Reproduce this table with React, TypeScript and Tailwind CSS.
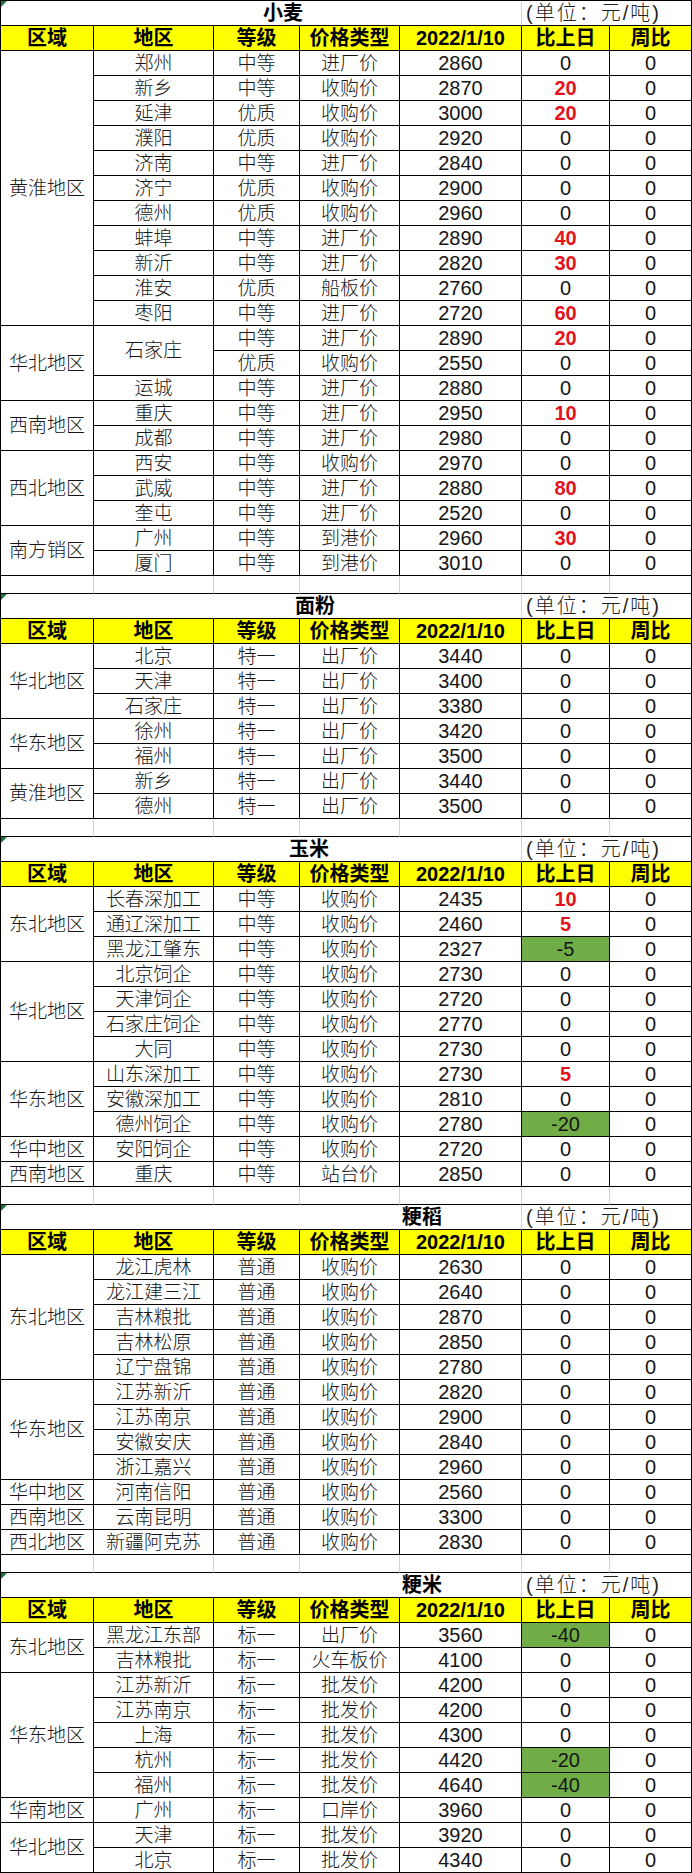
import React from "react";

type R = [string | null, string, string, number, number];
type Group = { area: string; rows: R[] };
type Section = { title: string; pl: string; groups: Group[] };

const sections: Section[] = [
  {
    title: "小麦",
    pl: "pl-[262px]",
    groups: [
      {
        area: "黄淮地区",
        rows: [
          ["郑州", "中等", "进厂价", 2860, 0],
          ["新乡", "中等", "收购价", 2870, 20],
          ["延津", "优质", "收购价", 3000, 20],
          ["濮阳", "优质", "收购价", 2920, 0],
          ["济南", "中等", "进厂价", 2840, 0],
          ["济宁", "优质", "收购价", 2900, 0],
          ["德州", "优质", "收购价", 2960, 0],
          ["蚌埠", "中等", "进厂价", 2890, 40],
          ["新沂", "中等", "进厂价", 2820, 30],
          ["淮安", "优质", "船板价", 2760, 0],
          ["枣阳", "中等", "进厂价", 2720, 60],
        ],
      },
      {
        area: "华北地区",
        rows: [
          ["石家庄", "中等", "进厂价", 2890, 20],
          [null, "优质", "收购价", 2550, 0],
          ["运城", "中等", "进厂价", 2880, 0],
        ],
      },
      {
        area: "西南地区",
        rows: [
          ["重庆", "中等", "进厂价", 2950, 10],
          ["成都", "中等", "进厂价", 2980, 0],
        ],
      },
      {
        area: "西北地区",
        rows: [
          ["西安", "中等", "收购价", 2970, 0],
          ["武威", "中等", "进厂价", 2880, 80],
          ["奎屯", "中等", "进厂价", 2520, 0],
        ],
      },
      {
        area: "南方销区",
        rows: [
          ["广州", "中等", "到港价", 2960, 30],
          ["厦门", "中等", "到港价", 3010, 0],
        ],
      },
    ],
  },
  {
    title: "面粉",
    pl: "pl-[294px]",
    groups: [
      {
        area: "华北地区",
        rows: [
          ["北京", "特一", "出厂价", 3440, 0],
          ["天津", "特一", "出厂价", 3400, 0],
          ["石家庄", "特一", "出厂价", 3380, 0],
        ],
      },
      {
        area: "华东地区",
        rows: [
          ["徐州", "特一", "出厂价", 3420, 0],
          ["福州", "特一", "出厂价", 3500, 0],
        ],
      },
      {
        area: "黄淮地区",
        rows: [
          ["新乡", "特一", "出厂价", 3440, 0],
          ["德州", "特一", "出厂价", 3500, 0],
        ],
      },
    ],
  },
  {
    title: "玉米",
    pl: "pl-[288px]",
    groups: [
      {
        area: "东北地区",
        rows: [
          ["长春深加工", "中等", "收购价", 2435, 10],
          ["通辽深加工", "中等", "收购价", 2460, 5],
          ["黑龙江肇东", "中等", "收购价", 2327, -5],
        ],
      },
      {
        area: "华北地区",
        rows: [
          ["北京饲企", "中等", "收购价", 2730, 0],
          ["天津饲企", "中等", "收购价", 2720, 0],
          ["石家庄饲企", "中等", "收购价", 2770, 0],
          ["大同", "中等", "收购价", 2730, 0],
        ],
      },
      {
        area: "华东地区",
        rows: [
          ["山东深加工", "中等", "收购价", 2730, 5],
          ["安徽深加工", "中等", "收购价", 2810, 0],
          ["德州饲企", "中等", "收购价", 2780, -20],
        ],
      },
      { area: "华中地区", rows: [["安阳饲企", "中等", "收购价", 2720, 0]] },
      { area: "西南地区", rows: [["重庆", "中等", "站台价", 2850, 0]] },
    ],
  },
  {
    title: "粳稻",
    pl: "pl-[401px]",
    groups: [
      {
        area: "东北地区",
        rows: [
          ["龙江虎林", "普通", "收购价", 2630, 0],
          ["龙江建三江", "普通", "收购价", 2640, 0],
          ["吉林粮批", "普通", "收购价", 2870, 0],
          ["吉林松原", "普通", "收购价", 2850, 0],
          ["辽宁盘锦", "普通", "收购价", 2780, 0],
        ],
      },
      {
        area: "华东地区",
        rows: [
          ["江苏新沂", "普通", "收购价", 2820, 0],
          ["江苏南京", "普通", "收购价", 2900, 0],
          ["安徽安庆", "普通", "收购价", 2840, 0],
          ["浙江嘉兴", "普通", "收购价", 2960, 0],
        ],
      },
      { area: "华中地区", rows: [["河南信阳", "普通", "收购价", 2560, 0]] },
      { area: "西南地区", rows: [["云南昆明", "普通", "收购价", 3300, 0]] },
      { area: "西北地区", rows: [["新疆阿克苏", "普通", "收购价", 2830, 0]] },
    ],
  },
  {
    title: "粳米",
    pl: "pl-[401px]",
    groups: [
      {
        area: "东北地区",
        rows: [
          ["黑龙江东部", "标一", "出厂价", 3560, -40],
          ["吉林粮批", "标一", "火车板价", 4100, 0],
        ],
      },
      {
        area: "华东地区",
        rows: [
          ["江苏新沂", "标一", "批发价", 4200, 0],
          ["江苏南京", "标一", "批发价", 4200, 0],
          ["上海", "标一", "批发价", 4300, 0],
          ["杭州", "标一", "批发价", 4420, -20],
          ["福州", "标一", "批发价", 4640, -40],
        ],
      },
      { area: "华南地区", rows: [["广州", "标一", "口岸价", 3960, 0]] },
      {
        area: "华北地区",
        rows: [
          ["天津", "标一", "批发价", 3920, 0],
          ["北京", "标一", "批发价", 4340, 0],
        ],
      },
    ],
  },
];

const spanCls: Record<number, string> = {
  1: "row-span-1",
  2: "row-span-2",
  3: "row-span-3",
  4: "row-span-4",
  5: "row-span-5",
  11: "row-span-11",
};

const base =
  "border-r border-b border-black flex items-center justify-center leading-none text-[#151515]";
const cell = "h-[25px] " + base + " text-[19px] font-light";
const merged = base + " text-[19px] font-light";
const num = "h-[25px] " + base + " text-[20px]";
const headCell =
  "h-[25px] border-r border-b border-black bg-[#ffff00] flex items-center justify-center text-[20px] font-bold leading-none text-black";

const headers = ["区域", "地区", "等级", "价格类型", "2022/1/10", "比上日", "周比"];

function Change({ v }: { v: number }) {
  if (v > 0) {
    return <div className={num + " !text-[#e4131b] font-bold"}>{v}</div>;
  }
  if (v < 0) {
    return <div className={num + " bg-[#70ad47]"}>{v}</div>;
  }
  return <div className={num}>0</div>;
}

function SectionRows({ s, first }: { s: Section; first: boolean }) {
  const out: React.ReactNode[] = [];
  if (!first) {
    for (let i = 0; i < 7; i++) {
      out.push(
        <div
          key={"e" + i}
          className={
            "h-[18px] border-b border-black " +
            (i === 6 ? "border-r border-r-black" : "border-r border-r-[#d4d4d4]")
          }
        />
      );
    }
  }
  out.push(
    <div
      key="title"
      className={
        "col-span-5 h-[25px] border-b border-black border-r border-r-[#d4d4d4] relative flex items-center text-[20px] font-bold leading-none text-black " +
        s.pl
      }
    >
      <span className="absolute left-0 top-0 w-0 h-0 border-t-[6px] border-t-[#217346] border-r-[6px] border-r-transparent" />
      {s.title}
    </div>
  );
  out.push(
    <div
      key="unit"
      className="col-span-2 h-[25px] border-b border-r border-black flex items-center pl-[4px] text-[20px] font-light leading-none text-[#222] tracking-[2px]"
    >
      (单位：元/吨)
    </div>
  );
  headers.forEach((h) =>
    out.push(
      <div key={"h" + h} className={headCell}>
        {h}
      </div>
    )
  );
  s.groups.forEach((g, gi) => {
    g.rows.forEach((r, ri) => {
      const k = `${gi}-${ri}`;
      if (ri === 0) {
        out.push(
          <div key={k + "a"} className={merged + " " + spanCls[g.rows.length]}>
            {g.area}
          </div>
        );
      }
      if (r[0] !== null) {
        let span = 1;
        while (ri + span < g.rows.length && g.rows[ri + span][0] === null) span++;
        out.push(
          <div
            key={k + "c"}
            className={(span > 1 ? merged : cell) + " " + spanCls[span]}
          >
            {r[0]}
          </div>
        );
      }
      out.push(
        <div key={k + "g"} className={cell}>
          {r[1]}
        </div>
      );
      out.push(
        <div key={k + "t"} className={cell}>
          {r[2]}
        </div>
      );
      out.push(
        <div key={k + "p"} className={num}>
          {r[3]}
        </div>
      );
      out.push(<Change key={k + "d"} v={r[4]} />);
      out.push(
        <div key={k + "w"} className={num}>
          0
        </div>
      );
    });
  });
  return <>{out}</>;
}

export default function App() {
  return (
    <div className="w-[692px] bg-white font-['Liberation_Sans','Noto_Sans_CJK_SC',sans-serif]">
      <div className="grid grid-cols-[93px_120px_86px_100px_122px_88px_82px] border-l border-t border-black">
        {sections.map((s, i) => (
          <SectionRows key={s.title} s={s} first={i === 0} />
        ))}
      </div>
    </div>
  );
}
